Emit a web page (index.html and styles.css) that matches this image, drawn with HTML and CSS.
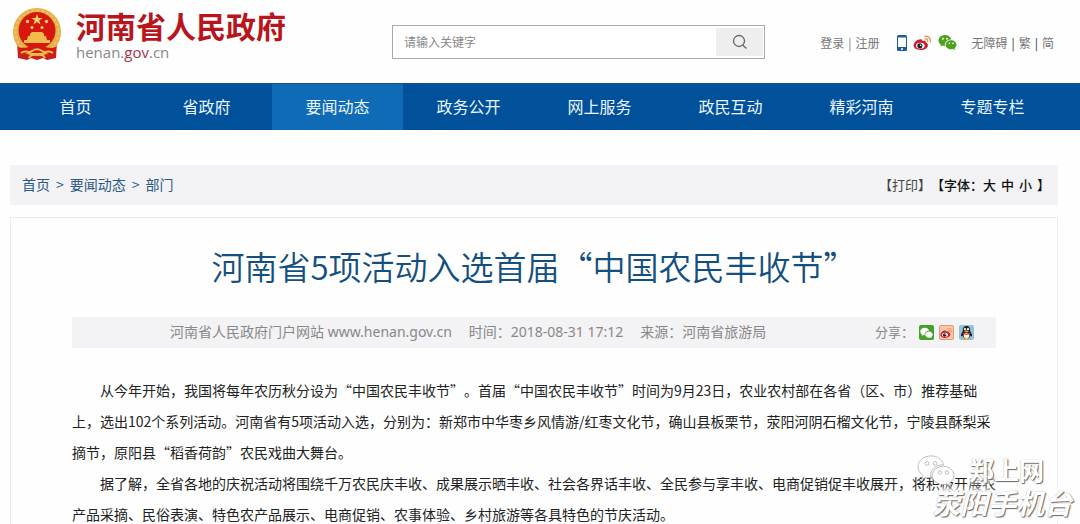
FILE: index.html
```html
<!DOCTYPE html>
<html lang="zh-CN">
<head>
    <meta charset="UTF-8">
    <meta name="viewport" content="width=device-width, initial-scale=1.0">
    <title>河南省5项活动入选首届“中国农民丰收节”</title>
    <link rel="stylesheet" href="styles.css">
</head>
<body>
    <!-- shared shapes -->
    <svg class="defs" aria-hidden="true">
        <symbol id="wechat" viewBox="0 0 20 18">
            <path d="M7.500 1C3.400 1 .5 3.600.5 6.800c0 1.900 1 3.500 2.600 4.600L2.400 13.500l2.500-1.300c.8.2 1.500.4 2.300.4C6.600 8.500 9.800 5.600 14 5.700 13.300 2.900 10.700 1 7.500 1z"/>
            <path d="M19.500 11.300c0-2.700-2.600-4.800-5.700-4.800S8 8.700 8 11.300c0 2.700 2.600 4.900 5.800 4.900.7 0 1.300-.1 1.900-.3l2.200 1.200-.6-1.900c1.300-.9 2.200-2.300 2.200-3.900z"/>
            <g fill="#fff"><circle cx="5.200" cy="5" r="1"/><circle cx="9.500" cy="5" r="1"/><circle cx="12" cy="9.800" r=".9"/><circle cx="15.800" cy="9.800" r=".9"/></g>
        </symbol>
        <symbol id="weibo" viewBox="0 0 20 17">
            <path fill="#c8202f" d="M8 4.500C5 4.300.8 7.500.6 11c-.2 3 3.200 5 7.200 5 4.500 0 8-2.400 8-5.200 0-1.700-1.100-2.500-2.300-2.900.5-1.500-.8-2.400-3.600-1.400.2-1.100-.3-1.900-1.900-2z"/>
            <ellipse cx="7.700" cy="11.300" rx="4.600" ry="3.100" fill="#fff"/>
            <circle cx="7.200" cy="11.500" r="2.700" fill="#222"/>
            <circle cx="8" cy="10.900" r=".8" fill="#fff"/>
            <path d="M12.500 1.400c3.600-.8 6.500 2 5.700 5.700M12.900 4.100c1.700-.3 2.800.9 2.500 2.500" fill="none" stroke="#eb9a4b" stroke-width="1.500" stroke-linecap="round"/>
        </symbol>
    </svg>

    <header class="header">
        <a class="logo" href="#">
            <svg class="emblem" viewBox="0 0 52 54" aria-hidden="true">
                <path d="M6 34l1 17 9 2 4-2 6 2 6-2 4 2 9-2 1-17z" fill="#c8201c"/>
                <circle cx="26" cy="25" r="24" fill="#e5b047"/>
                <circle cx="26" cy="25" r="21.500" fill="none" stroke="#efc469" stroke-width="2" stroke-dasharray="3 2"/>
                <circle cx="26" cy="23.500" r="18.500" fill="#d6180f"/>
                <path fill="#f5cf6c" d="M26 7l1.400 4h4.200l-3.400 2.500 1.300 4-3.500-2.400-3.500 2.400 1.300-4-3.400-2.500h4.200z"/>
                <g fill="#f5cf6c"><circle cx="16.500" cy="14.500" r="1.700"/><circle cx="35.500" cy="14.500" r="1.700"/><circle cx="21" cy="20.500" r="1.500"/><circle cx="31" cy="20.500" r="1.500"/></g>
                <path fill="#f0bd4d" d="M19 27l2-2h10l2 2v2h2l1 4h3v3H13v-3h3l1-4h2z"/>
                <path fill="#d6180f" d="M7 40c6 2 11 0 13-1 3-1 8-1 12 0 2 1 7 3 13 1v6H7z"/>
                <path fill="none" stroke="#f0bd4d" stroke-width="2" d="M10 46c5-4 8 1 11-2 3-2 7-2 10 0 3 3 6-2 11 2M18 51c2-5 14-5 16 0"/>
            </svg>
            <span class="logo-text">
                <strong>河南省人民政府</strong>
                <span class="domain">henan.<b>gov</b>.cn</span>
            </span>
        </a>
        <form class="search">
            <input type="text" placeholder="请输入关键字" aria-label="请输入关键字">
            <button type="button" aria-label="搜索">
                <svg width="16" height="16" viewBox="0 0 16 16" fill="none" stroke="#666" stroke-width="1.300"><circle cx="7" cy="7" r="5.500"/><path d="M10.500 11l4 3.500"/></svg>
            </button>
        </form>
        <div class="tools">
            <span class="login"><a href="#">登录</a><i>|</i><a href="#">注册</a></span>
            <span class="social">
                <a href="#" aria-label="手机版"><svg width="10" height="16" viewBox="0 0 10 16"><rect width="10" height="16" rx="1.500" fill="#1d5c9f"/><path fill="#fff" d="M1 2.500h8v9.500H1z"/><circle cx="5" cy="14" r="1" fill="#fff"/></svg></a>
                <a href="#" aria-label="微博"><svg width="19" height="16"><use href="#weibo"/></svg></a>
                <a href="#" aria-label="微信"><svg width="19" height="17" fill="#4fa31c"><use href="#wechat"/></svg></a>
            </span>
            <span class="lang"><a href="#">无障碍</a><i>|</i><a href="#">繁</a><i>|</i><a href="#">简</a></span>
        </div>
    </header>

    <nav class="nav">
        <a href="#">首页</a>
        <a href="#">省政府</a>
        <a href="#" class="active">要闻动态</a>
        <a href="#">政务公开</a>
        <a href="#">网上服务</a>
        <a href="#">政民互动</a>
        <a href="#">精彩河南</a>
        <a href="#">专题专栏</a>
    </nav>

    <main class="main">
        <div class="crumbs">
            <div class="path"><a href="#">首页</a><span>&gt;</span><a href="#">要闻动态</a><span>&gt;</span><a href="#">部门</a></div>
            <div class="font-size"><a href="#">【打印】</a><b>【字体：<a href="#">大</a><a href="#">中</a><a href="#">小</a>】</b></div>
        </div>

        <article class="article">
            <h1>河南省5项活动入选首届“中国农民丰收节”</h1>
            <div class="meta">
                <div class="source">
                    <span>河南省人民政府门户网站 <span class="site">www.henan.gov.cn</span></span>
                    <span>时间：2018-08-31 17:12</span>
                    <span>来源：河南省旅游局</span>
                </div>
                <div class="share">
                    <span>分享：</span>
                    <a href="#" class="s-wechat" aria-label="微信"><svg width="13" height="12" fill="#fff"><use href="#wechat"/></svg></a>
                    <a href="#" class="s-weibo" aria-label="微博"><svg width="13" height="12"><use href="#weibo"/></svg></a>
                    <a href="#" class="s-qq" aria-label="QQ"><svg width="15" height="15" viewBox="0 0 15 15"><path d="M7.500 1C4.500 1 3.800 3.300 3.800 6L2 9.500v2l1.500-.8L5 13h5l1.500-2.300 1.500.8v-2L11.200 6c0-2.700-.7-5-3.700-5z" fill="#222"/><ellipse cx="7.500" cy="10.500" rx="2.800" ry="2.800" fill="#fff"/><circle cx="6" cy="4.200" r="1.100" fill="#fff"/><circle cx="9" cy="4.200" r="1.100" fill="#fff"/><ellipse cx="7.500" cy="6.400" rx="2.200" ry=".9" fill="#f0a020"/><path d="M3.800 7.500c2 1.400 5.400 1.400 7.400 0v1.300c-2 1.200-5.400 1.200-7.400 0z" fill="#d8302a"/><path d="M3.500 13.500h3.500M8 13.500h3.500" stroke="#f0a020" stroke-width="1.500"/></svg></a>
                </div>
            </div>
            <div class="text">
                <p>从今年开始，我国将每年农历秋分设为“中国农民丰收节”。首届“中国农民丰收节”时间为9月23日，农业农村部在各省（区、市）推荐基础上，选出102个系列活动。河南省有5项活动入选，分别为：新郑市中华枣乡风情游/红枣文化节，确山县板栗节，荥阳河阴石榴文化节，宁陵县酥梨采摘节，原阳县“稻香荷韵”农民戏曲大舞台。</p>
                <p>据了解，全省各地的庆祝活动将围绕千万农民庆丰收、成果展示晒丰收、社会各界话丰收、全民参与享丰收、电商促销促丰收展开，将积极开展农产品采摘、民俗表演、特色农产品展示、电商促销、农事体验、乡村旅游等各具特色的节庆活动。</p>
            </div>
        </article>
    </main>

    <div class="watermark">
        <svg width="40" height="34" fill="#fff" stroke="#aaa" stroke-width=".4"><use href="#wechat"/></svg>
        <span class="mark-top">郑上网</span>
        <span class="mark-bottom">荥阳手机台</span>
    </div>
</body>
</html>
```
FILE: styles.css
```css
* {
    box-sizing: border-box;
}
body {
    margin: 0;
    position: relative;
    height: 100vh;
    overflow: hidden;
    background: #fefefe;
    font-family: "Noto Sans CJK SC", sans-serif;
    font-size: 14px;
    color: #222;
    text-spacing-trim: space-all;
}
a {
    color: inherit;
    text-decoration: none;
}
svg {
    display: block;
}
.defs {
    position: absolute;
    width: 0;
    height: 0;
}

/* header */
.header {
    display: flex;
    align-items: center;
    height: 83px;
    padding: 0 26px 0 11px;
}
.logo {
    display: flex;
    align-items: center;
    gap: 13px;
    flex: 0 0 381px;
    margin-bottom: 16px;
}
.emblem {
    width: 52px;
    height: 54px;
}
.logo-text {
    display: flex;
    flex-direction: column;
}
.logo-text strong {
    font-size: 30px;
    line-height: 36px;
    color: #b9151c;
}
.domain {
    font-family: "Open Sans", sans-serif;
    font-size: 15px;
    line-height: 18px;
    color: #888;
}
.domain b {
    font-weight: 400;
    color: #a8344a;
}
.search {
    display: flex;
    flex: 0 0 373px;
    height: 34px;
    padding: 2px 1px;
    border: 1px solid #aaa;
    background: #fff;
}
.search input {
    flex: 1;
    min-width: 0;
    padding: 0 10px;
    border: 0;
    font: 12px "Noto Sans CJK SC", sans-serif;
}
.search input::placeholder {
    color: #888;
}
.search button {
    display: flex;
    align-items: center;
    justify-content: center;
    width: 47px;
    border: 0;
    background: #efeeef;
}
.tools {
    display: flex;
    align-items: center;
    margin-left: auto;
    margin-top: 2px;
    font-size: 12px;
    color: #777;
    white-space: nowrap;
}
.tools i {
    margin: 0 4px;
    font-style: normal;
}
.social {
    display: flex;
    align-items: center;
    gap: 6px;
    margin: 0 14px 0 18px;
}
.lang i {
    color: #333;
}

/* nav */
.nav {
    display: grid;
    grid-template-columns: repeat(8, 1fr);
    height: 47px;
    padding: 0 22px 0 10px;
    background: #01519a;
    border-top: 1px solid #17507f;
}
.nav a {
    line-height: 44px;
    font-size: 16px;
    text-align: center;
    color: #e9f6ff;
}
.nav .active {
    background: #0f6bb5;
}

/* content */
.main {
    padding: 35px 22px 0 10px;
}
.crumbs {
    display: flex;
    align-items: center;
    justify-content: space-between;
    height: 40px;
    padding: 0 8px 2px 12px;
    background: #f3f2f5;
}
.path {
    color: #2b5b86;
}
.path span {
    margin: 0 6px;
}
.font-size {
    font-size: 13px;
    color: #444;
}
.font-size b {
    font-weight: 500;
    color: #111;
}
.font-size b a {
    margin-right: 5px;
}
.article {
    margin-top: 12px;
    padding: 24px 61px 0;
    border: 1px solid #ebebeb;
}
.article h1 {
    margin: 0;
    font-size: 33px;
    line-height: 48px;
    font-weight: 350;
    text-align: center;
    color: #14507f;
}
.meta {
    display: flex;
    align-items: center;
    height: 31px;
    margin-top: 27px;
    padding: 0 22px 0 98px;
    background: #f3f2f5;
    color: #888;
    font-family: "Noto Sans", "Noto Sans CJK SC", sans-serif;
    line-height: 29px;
    white-space: nowrap;
}
.source {
    display: flex;
    gap: 17px;
    padding-bottom: 2px;
}
.share {
    display: flex;
    align-items: center;
    gap: 5px;
    margin-left: auto;
    font-size: 13px;
}
.share a {
    display: flex;
    align-items: center;
    justify-content: center;
    width: 15px;
    height: 15px;
    border-radius: 2px;
}
.s-wechat {
    background: #45a02c;
}
.s-weibo {
    background: #f6c9a8;
    border: 1px solid #dc9a80;
}
.s-qq {
    background: #8fc3e0;
}
.text {
    padding-top: 27px;
    line-height: 31px;
}
.text p {
    margin: 0;
    text-indent: 28px;
}

/* watermark over the article */
.watermark {
    position: absolute;
    right: 8px;
    bottom: 4px;
    width: 156px;
    height: 66px;
    color: #fff;
    font-weight: 700;
    font-style: italic;
    white-space: nowrap;
    text-shadow: 1px 1px 1px #666, 0 0 1px #aaa, 0 0 5px #fff, 0 0 5px #fff, 0 0 6px #fff, 0 0 6px #fff;
}
.watermark span {
    position: absolute;
    right: 0;
}
.watermark .mark-top {
    top: 0;
    right: 28px;
    font-size: 25px;
    line-height: 30px;
    font-style: normal;
}
.watermark .mark-bottom {
    bottom: 0;
    font-size: 28px;
    line-height: 36px;
}
```
